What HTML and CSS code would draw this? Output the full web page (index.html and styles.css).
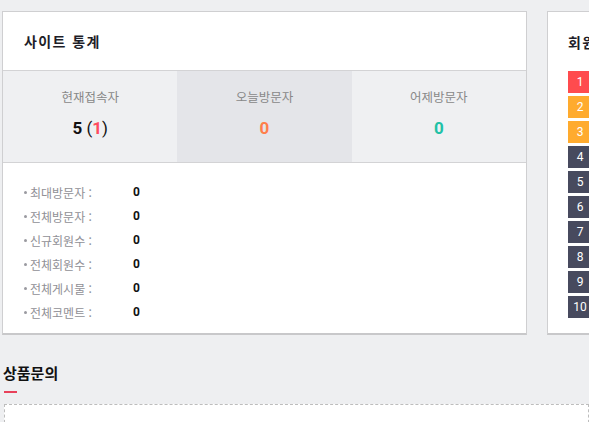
FILE: index.html
```html
<!DOCTYPE html>
<html lang="ko">
<head>
<meta charset="utf-8">
<link rel="stylesheet" href="styles.css">
</head>
<body>
<div class="page">
  <div class="row">
    <section class="card stats-card">
      <div class="card-head"><h2 class="card-title">사이트 통계</h2></div>
      <div class="stat-cols">
        <div class="stat-col">
          <div class="stat-label">현재접속자</div>
          <div class="stat-num">5 <span class="paren">(</span><span class="red">1</span><span class="paren">)</span></div>
        </div>
        <div class="stat-col mid">
          <div class="stat-label">오늘방문자</div>
          <div class="stat-num orange">0</div>
        </div>
        <div class="stat-col">
          <div class="stat-label">어제방문자</div>
          <div class="stat-num teal">0</div>
        </div>
      </div>
      <ul class="stat-list">
        <li><span class="li-label">최대방문자 :</span><span class="li-val">0</span></li>
        <li><span class="li-label">전체방문자 :</span><span class="li-val">0</span></li>
        <li><span class="li-label">신규회원수 :</span><span class="li-val">0</span></li>
        <li><span class="li-label">전체회원수 :</span><span class="li-val">0</span></li>
        <li><span class="li-label">전체게시물 :</span><span class="li-val">0</span></li>
        <li><span class="li-label">전체코멘트 :</span><span class="li-val">0</span></li>
      </ul>
    </section>
    <section class="card rank-card">
      <div class="rank-head"><h2 class="card-title">회원 포인트 순위</h2></div>
      <ol class="rank-list">
        <li><span class="badge b-red">1</span></li>
        <li><span class="badge b-orange">2</span></li>
        <li><span class="badge b-orange">3</span></li>
        <li><span class="badge">4</span></li>
        <li><span class="badge">5</span></li>
        <li><span class="badge">6</span></li>
        <li><span class="badge">7</span></li>
        <li><span class="badge">8</span></li>
        <li><span class="badge">9</span></li>
        <li><span class="badge">10</span></li>
      </ol>
    </section>
  </div>
  <section class="qna">
    <h3 class="qna-title">상품문의</h3>
    <div class="qna-bar"></div>
    <div class="qna-box"></div>
  </section>
</div>
</body>
</html>
```
FILE: styles.css
```css
* { box-sizing: border-box; margin: 0; padding: 0; }
html, body { width: 589px; height: 422px; overflow: hidden; }
body {
  background: #eeeff1;
  font-family: "Noto Sans CJK KR", "Noto Sans", sans-serif;
  color: #222;
}
.page { padding: 11px 0 0 2px; }
.row { display: flex; gap: 20px; align-items: flex-start; }
.card {
  background: #fff;
  border: 1px solid #cfcfd1;
  border-bottom: 2px solid #c8c8ca;
  flex-shrink: 0;
}
.stats-card { width: 525px; height: 324px; display: flex; flex-direction: column; }
.card-head {
  height: 59px;
  border-bottom: 1px solid #d3d3d5;
  display: flex;
  align-items: center;
  padding: 0 0 0 21px;
}
.card-title {
  font-size: 14px;
  font-weight: 700;
  color: #1e1e28;
  letter-spacing: 1.4px;
  line-height: 20px;
}
.stat-cols {
  display: flex;
  height: 92px;
  border-bottom: 1px solid #d3d3d5;
}
.stat-col {
  flex: 1;
  background: #eff0f2;
  display: flex;
  flex-direction: column;
  align-items: center;
  padding-top: 17px;
}
.stat-col.mid { background: #e4e5e9; }
.stat-label { font-size: 12.5px; color: #888; line-height: 18px; }
.stat-num {
  font-family: Roboto, "Noto Sans", sans-serif;
  font-weight: 700;
  font-size: 17px;
  line-height: 20px;
  margin-top: 12px;
  color: #111;
}
.stat-num .paren { color: #111; font-weight: 400; }
.red { color: #ff4b5e; }
.orange { color: #ff7e4b; }
.teal { color: #21c1a6; }
.stat-list { list-style: none; padding: 17px 0 0 21px; }
.stat-list li {
  display: flex;
  align-items: center;
  height: 24px;
  font-size: 12px;
}
.li-label {
  width: 109px;
  color: #909096;
  display: flex;
  align-items: center;
}
.li-label::before {
  content: "";
  width: 3px;
  height: 3px;
  border-radius: 50%;
  background: #9a9aa0;
  margin-right: 3px;
}
.li-val {
  font-family: Roboto, "Noto Sans", sans-serif;
  font-weight: 700;
  color: #111;
  font-size: 12px;
}
.rank-card { width: 300px; height: 324px; padding: 0 0 0 20px; }
.rank-head { height: 59px; display: flex; align-items: center; }
.rank-list { list-style: none; display: flex; flex-direction: column; gap: 3px; }
.rank-list li { display: flex; height: 22px; }
.badge {
  width: 24px;
  height: 22px;
  background: #474a5e;
  color: #fff;
  font-family: Roboto, "Noto Sans", sans-serif;
  font-size: 12px;
  display: flex;
  align-items: center;
  justify-content: center;
}
.b-red { background: #ff4b4e; }
.b-orange { background: #ffab2e; }
.qna { padding: 27px 0 0 1px; }
.qna-title { font-size: 15px; font-weight: 700; color: #111; line-height: 22px; }
.qna-bar { width: 13px; height: 2px; background: #e8415a; margin: 7px 0 0 1px; }
.qna-box {
  margin: 11px 0 0 1px;
  height: 40px;
  background: #fff;
  border: 1px dashed #bdbdbd;
}
```
